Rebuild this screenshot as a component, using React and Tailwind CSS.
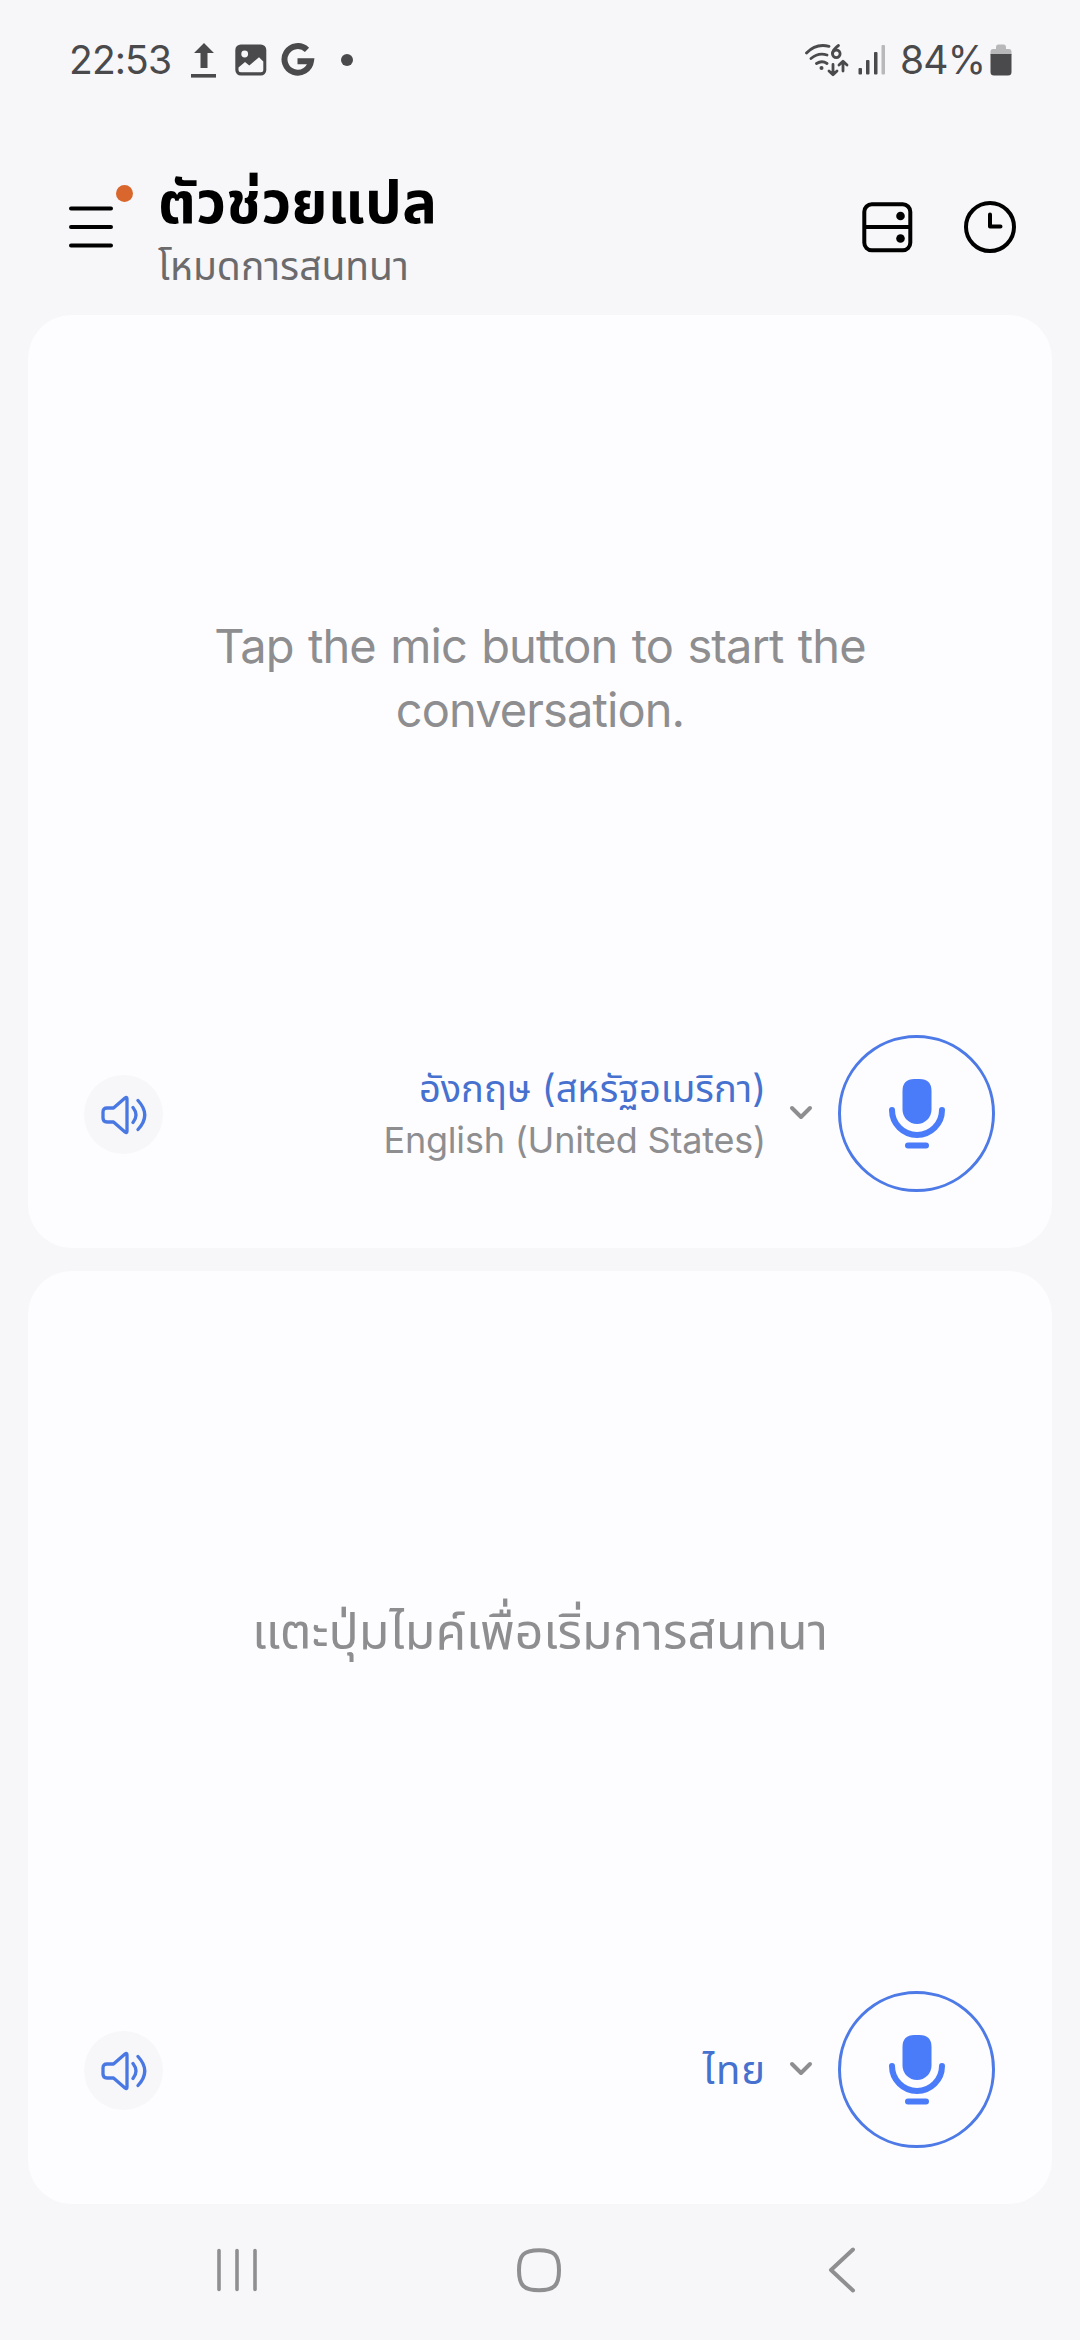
function StatusBar() {
    return (
        <div className="flex h-[120px] items-center justify-between pl-[69px] pr-[68px] text-[#4a4a4c]">
            <div className="flex items-center">
                <span className="w-[103px] whitespace-nowrap text-[39px] font-normal leading-[48px] tracking-[-0.9px]">22:53</span>
                <svg className="ml-[17px] h-[36px] w-[28px]" viewBox="0 0 28 36" fill="currentColor">
                    <path d="M15 1 25 11h-6.500v15h-7V11H5z" />
                    <rect x="2" y="32" width="25" height="3.600" />
                </svg>
                <svg className="ml-[18px] h-[32px] w-[32px]" viewBox="0 0 32 32">
                    <rect x="0.300" y="0.500" width="31" height="31" rx="5.500" fill="currentColor" />
                    <circle cx="9.700" cy="10" r="3.400" fill="#f7f7f9" />
                    <path d="M3.500 23.500 10 18l4.300 3.400 9.700-8.200 4.300 4.300v8.300q0 2.500-2.500 2.500H6q-2.500 0-2.500-2.500z" fill="#f7f7f9" />
                </svg>
                <svg className="ml-[14px] h-[34px] w-[34px]" viewBox="0 0 34 34" fill="none" stroke="currentColor" strokeWidth="6">
                    <path d="M26 6.800A13.300 13.300 0 1 0 30 18.200H16.500" />
                </svg>
                <span className="ml-[26px] h-[12px] w-[12px] rounded-full bg-current" />
            </div>
            <div className="flex items-center">
                <svg className="h-[34px] w-[46px]" viewBox="0 0 46 34" fill="none" stroke="currentColor" strokeWidth="2.800" strokeLinecap="round" strokeLinejoin="round">
                    <path d="M2.500 10Q12 0 25 3.300M7 15.500q7.500-6.500 16-3.500M12.500 20.500q5.500-3.500 10.500 0" />
                    <circle cx="17.500" cy="25" r="2" fill="currentColor" stroke="none" />
                    <path d="M34.500 2.500q-5.500 4-6 8" />
                    <circle cx="32.300" cy="10.800" r="3.800" />
                    <path d="M29 21.500v10M25 28l4 3.800 4-3.800M39 28v-9.500M35 22l4-3.800 4 3.800" />
                </svg>
                <svg className="ml-[8px] h-[32px] w-[30px]" viewBox="0 0 30 32" fill="currentColor">
                    <rect x="0.500" y="24" width="3.500" height="6.500" rx="1" />
                    <rect x="8" y="16" width="3.500" height="14.500" rx="1" />
                    <rect x="16" y="8" width="3.500" height="22.500" rx="1" />
                    <rect x="23.500" y="1" width="3.500" height="29.500" rx="1" fill="#b8b8ba" />
                </svg>
                <span className="ml-[12px] w-[82px] whitespace-nowrap text-[39px] font-normal leading-[48px] tracking-[-0.8px]">84%</span>
                <svg className="ml-[8px] h-[32px] w-[22px]" viewBox="0 0 22 32">
                    <path d="M6 3q0-2.500 2-2.500h6q2 0 2 2.500v2h3q2.500 0 2.500 3v3H.500V8q0-3 2.500-3h3z" fill="#b8b8ba" />
                    <path d="M.500 10h21v18q0 3.500-3.500 3.500H4Q.500 31.500.500 28z" fill="currentColor" />
                </svg>
            </div>
        </div>
    )
}

function Header() {
    return (
        <div className="flex h-[195px] items-start pl-[69px] pr-[64px] text-black">
            <div className="relative mt-[85px] h-[44px] w-[44px]">
                <svg className="h-[44px] w-[44px]" viewBox="0 0 44 44" stroke="currentColor" strokeWidth="4" strokeLinecap="round">
                    <path d="M2 3.500h40M2 22h40M2 40.500h40" />
                </svg>
                <span className="absolute -top-[20px] left-[47px] h-[17px] w-[17px] rounded-full bg-[#d9662c]" />
            </div>
            <div className="ml-[45px] mt-[48px] flex flex-1 flex-col">
                <h1 className="h-[74px] whitespace-nowrap text-[58px] font-bold leading-[68px] tracking-[0.3px]">ตัวช่วยแปล</h1>
                <span className="h-[48px] whitespace-nowrap text-[39px] leading-[48px] text-[#6b6b6d]">โหมดการสนทนา</span>
            </div>
            <svg className="mt-[80px] h-[54px] w-[54px]" viewBox="0 0 54 54" fill="none" stroke="currentColor" strokeWidth="4">
                <rect x="4.300" y="4.300" width="46" height="46" rx="7.500" />
                <path d="M4 27h46" />
                <circle cx="40.500" cy="16" r="4.300" fill="currentColor" stroke="none" />
                <circle cx="40.500" cy="38.500" r="4.300" fill="currentColor" stroke="none" />
            </svg>
            <svg className="ml-[48px] mt-[80px] h-[54px] w-[54px]" viewBox="0 0 54 54" fill="none" stroke="currentColor" strokeWidth="4" strokeLinecap="round" strokeLinejoin="round">
                <circle cx="28" cy="27" r="24" />
                <path d="M28 14.500v12h10.500" />
            </svg>
        </div>
    )
}

function Panel({ prompt, children }) {
    return (
        <div className="flex h-[933px] flex-col rounded-[44px] bg-[#fdfdff]">
            <div className="flex h-[720px] items-center justify-center text-center text-[#8e8e90]">{prompt}</div>
            <div className="flex h-[157px] items-center pl-[56px] pr-[57px]">
                <button className="mt-[2px] flex h-[79px] w-[79px] items-center justify-center rounded-full bg-[#f7f7f9] text-[#4a78e3]">
                    <svg className="h-[48px] w-[48px]" viewBox="0 0 48 48" fill="none" stroke="currentColor" strokeWidth="3.300" strokeLinecap="round" strokeLinejoin="round">
                        <path d="M27 8q0-2.500-2-1L13.500 17H7q-4 0-4 4v6q0 4 4 4h6.500L25 41q2 1.500 2-1zM33 16.500q6 7.500 0 15M38 9.500q13.500 14.500 0 29" />
                    </svg>
                </button>
                <div className="flex-1" />
                {children}
                <svg className="mb-[2px] ml-[22px] h-[16px] w-[26px]" viewBox="0 0 26 16" fill="none" stroke="#8e8e90" strokeWidth="4" strokeLinecap="round" strokeLinejoin="round">
                    <path d="m4 3 9 9 9-9" />
                </svg>
                <button className="ml-[24px] flex h-[157px] w-[157px] items-center justify-center rounded-full border-[3px] border-[#4d7ae6] text-[#4a7bf8]">
                    <svg className="h-[72px] w-[58px]" viewBox="0 0 58 72" fill="none" stroke="currentColor" strokeWidth="6" strokeLinecap="round">
                        <path d="M14.500 13q0-12 12-12h5q12 0 12 12v18.500a14.500 14.500 0 0 1-29 0z" fill="currentColor" stroke="none" />
                        <path d="M4 32a25 25 0 0 0 50 0M20 67.500h18" />
                    </svg>
                </button>
            </div>
        </div>
    )
}

function NavBar() {
    return (
        <div className="flex h-[131px] items-center justify-between pl-[214px] pr-[221px] text-[#8f8f91]">
            <svg className="h-[48px] w-[46px]" viewBox="0 0 46 48" stroke="currentColor" strokeWidth="3.600" strokeLinecap="round">
                <path d="M5 4.500v39M23 4.500v39M41 4.500v39" />
            </svg>
            <svg className="mr-[10px] h-[48px] w-[48px]" viewBox="0 0 48 48" fill="none" stroke="currentColor" strokeWidth="4">
                <path d="M24 4.200c15 0 20 4.500 20 20s-5 20-20 20-20-4.500-20-20 5-20 20-20z" />
            </svg>
            <svg className="h-[48px] w-[32px]" viewBox="0 0 32 48" fill="none" stroke="currentColor" strokeWidth="4" strokeLinecap="round" strokeLinejoin="round">
                <path d="M26 3.500 4 24l22 20.500" />
            </svg>
        </div>
    )
}

function App() {
    return (
        <div className="flex h-[2340px] w-[1080px] flex-col overflow-hidden bg-[#f7f7f9] font-['Inter','Noto_Sans_Thai','Noto_Sans',sans-serif]">
            <StatusBar />
            <Header />
            <div className="flex flex-col gap-[23px] px-[28px]">
                <Panel
                    prompt={<p className="pt-[5px] text-[47px] leading-[64px] tracking-[-0.9px] [word-spacing:2px]">Tap the mic button to start the<br />conversation.</p>}
                >
                    <div className="flex flex-col items-end whitespace-nowrap text-[36px] leading-[52px]">
                        <span className="text-[38px] text-[#4671cf]">อังกฤษ (สหรัฐอเมริกา)</span>
                        <span className="tracking-[-0.2px] text-[#8e8e90]">English (United States)</span>
                    </div>
                </Panel>
                <Panel
                    prompt={<p className="whitespace-nowrap text-[50px] leading-[64px]">แตะปุ่มไมค์เพื่อเริ่มการสนทนา</p>}
                >
                    <span className="whitespace-nowrap text-[40px] leading-[52px] tracking-[1px] text-[#4671cf]">ไทย</span>
                </Panel>
            </div>
            <NavBar />
        </div>
    )
}

export default App
